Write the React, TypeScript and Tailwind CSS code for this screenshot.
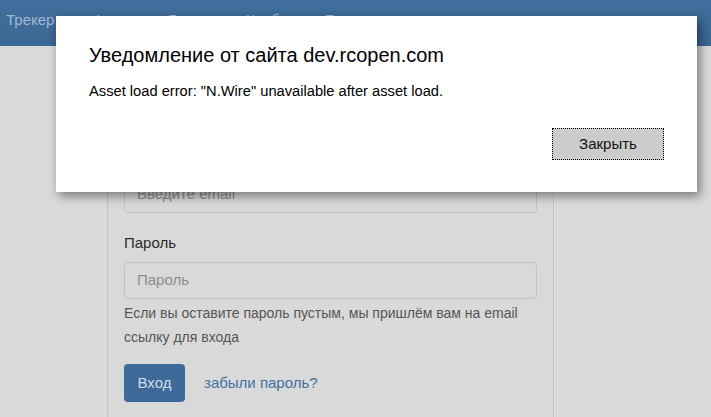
import React from "react";

export default function App() {
  const font = { fontFamily: '"Liberation Sans", Arial, sans-serif' };
  return (
    <div className="relative w-[711px] h-[417px] overflow-hidden bg-[#dadada]" style={font}>
      {/* Header */}
      <div className="h-[46px] bg-gradient-to-b from-[#416f9d] to-[#3b6794] flex items-start pt-[10px] pl-[6px] gap-[22px] text-[15px] leading-[20px] text-[#a3b9d0]">
        <span>Трекер</span>
        <span className="ml-[16px]">Форум</span>
        <span className="ml-[8px]">Блоги</span>
        <span className="ml-[15px]">Клубы</span>
        <span className="ml-[13px]">Барахолка</span>
      </div>

      {/* Content */}
      <div className="flex">
        <div className="w-[107px] shrink-0" />
        <div className="w-[447px] shrink-0 border-x border-[#c4c4c4] bg-[#d9d9d9] px-4 pt-[100px] h-[371px] shadow-[1px_0_0_#e2e2e2]">
          <div className="h-[20px] leading-[20px] text-[15px] text-[#2a2a2a] mb-[10px]">Email</div>
          <div className="h-[37px] rounded-[4px] border border-[#c2c2c2] flex items-center px-3 text-[15px] text-[#8c8c8c]">
            Введите email
          </div>
          <div className="mt-[20px] h-[20px] leading-[20px] text-[15px] text-[#2a2a2a] mb-[9px]">Пароль</div>
          <div className="h-[37px] rounded-[4px] border border-[#c2c2c2] flex items-center px-3 text-[15px] text-[#8c8c8c]">
            Пароль
          </div>
          <div className="mt-[2px] text-[14px] leading-[24px] text-[#555555]">
            Если вы оставите пароль пустым, мы пришлём вам на email
            <br />
            ссылку для входа
          </div>
          <div className="mt-[15px] flex items-center gap-[19px]">
            <div className="h-[38px] w-[61px] rounded-[4px] bg-[#3d6a98] text-[#d3dde8] text-[15px] flex items-center justify-center">
              Вход
            </div>
            <span className="text-[15px] text-[#4270a0]">забыли пароль?</span>
          </div>
        </div>
        <div className="flex-1" />
      </div>

      {/* Dialog */}
      <div className="absolute left-[56px] top-[16px] w-[641px] h-[176px] bg-white shadow-[3px_4px_10px_rgba(0,0,0,0.45)]">
        <div className="pl-[33px] pt-[27px] text-[20px] leading-[25px] text-black">
          Уведомление от сайта dev.rcopen.com
        </div>
        <div className="pl-[33px] mt-[14px] text-[14.7px] leading-[18px] text-black">
          Asset load error: "N.Wire" unavailable after asset load.
        </div>
        <div className="absolute left-[496px] top-[112px] w-[112px] h-[32px] bg-[#cccccc] border border-dotted border-black flex items-center justify-center text-[15px] text-[#111]">
          Закрыть
        </div>
      </div>
    </div>
  );
}
